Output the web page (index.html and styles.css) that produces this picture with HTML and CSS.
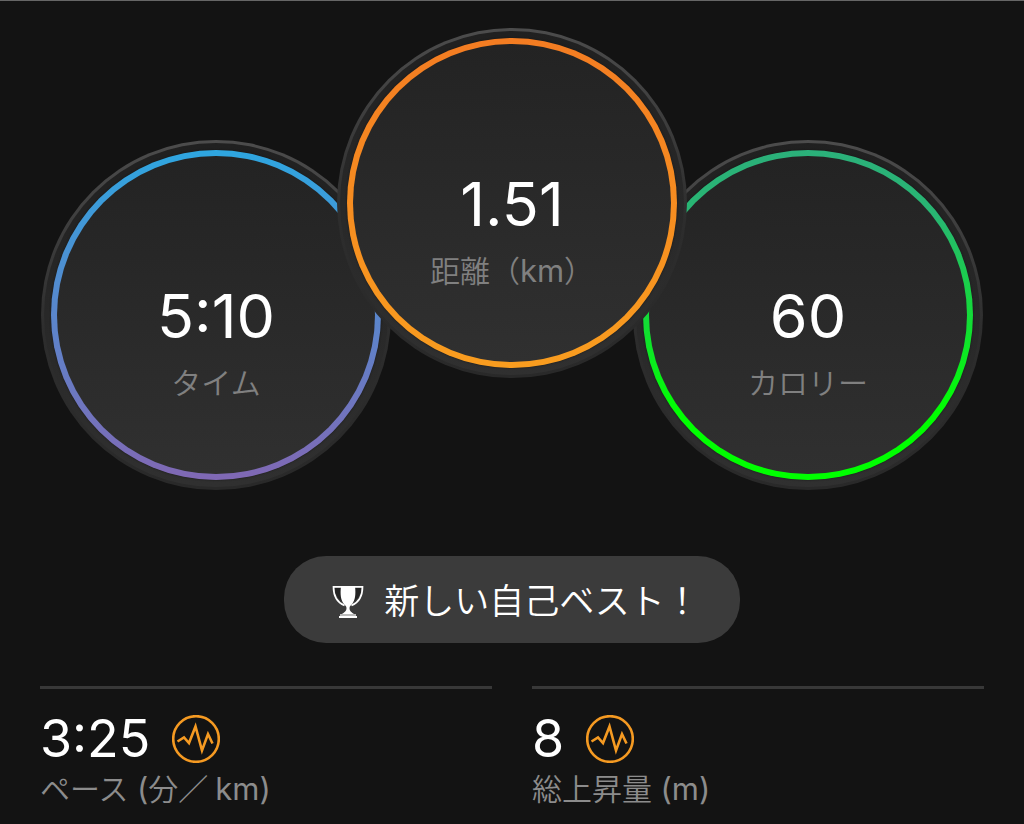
FILE: index.html
```html
<!DOCTYPE html>
<html lang="ja">
<head>
<meta charset="utf-8">
<meta name="viewport" content="width=device-width, initial-scale=1">
<title>ワークアウト</title>
<link rel="stylesheet" href="styles.css">
</head>
<body>
<main class="summary">
  <section class="dials">
    <div class="dial dial-time">
      <div class="ring">
        <div class="dial-value">5:10</div>
        <div class="dial-label">タイム</div>
      </div>
    </div>
    <div class="dial dial-distance">
      <div class="ring">
        <div class="dial-value">1.51</div>
        <div class="dial-label">距離（<span class="unit">km</span>）</div>
      </div>
    </div>
    <div class="dial dial-calories">
      <div class="ring">
        <div class="dial-value">60</div>
        <div class="dial-label">カロリー</div>
      </div>
    </div>
  </section>

  <button class="best" type="button">
    <svg class="trophy" viewBox="0 0 32 34" aria-hidden="true">
      <path d="M2.500 3h7c0 6 0 10 2 14.500C6.500 14.500 3 10 2.500 3zM29.500 3h-7c0 6 0 10-2 14.500 5-3 8.500-7.500 9-14.500z" fill="#242424"/>
      <path d="M10 1.800H1.500C1.500 11 5 17.500 12.500 20.500M22 1.800h8.500C30.500 11 27 17.500 19.500 20.500" fill="none" stroke="#fff" stroke-width="1.700"/>
      <path d="M9 1h14c1 9 0 14-2.500 17.500-1.500 2-3 2.500-3 4.500 0 3.500 2.500 4.500 4.500 6H10c2-1.500 4.500-2.500 4.500-6 0-2-1.500-2.500-3-4.500C9 15 8 10 9 1z" fill="#fff"/>
      <path d="M8 29h16v2H8z" fill="#bbb"/>
      <path d="M7 31h18v2H7z" fill="#fff"/>
    </svg>
    <span>新しい自己ベスト！</span>
  </button>

  <section class="stats">
    <div class="stat">
      <div class="stat-top">
        <span class="stat-value">3:25</span>
        <svg class="pulse" viewBox="0 0 48 48" aria-hidden="true">
          <circle cx="24" cy="24" r="22.800"/>
          <path d="M5.500 26.500L12 22.500l5 5.500L23.500 11.500l6.500 24L36 19l4.500 9.500"/>
        </svg>
      </div>
      <div class="stat-label">ペース <span class="unit">(</span>分／<span class="unit unit-after-slash">km)</span></div>
    </div>
    <div class="stat">
      <div class="stat-top">
        <span class="stat-value">8</span>
        <svg class="pulse" viewBox="0 0 48 48" aria-hidden="true">
          <circle cx="24" cy="24" r="22.800"/>
          <path d="M5.500 26.500L12 22.500l5 5.500L23.500 11.500l6.500 24L36 19l4.500 9.500"/>
        </svg>
      </div>
      <div class="stat-label">総上昇量 <span class="unit">(m)</span></div>
    </div>
  </section>
</main>
</body>
</html>
```
FILE: styles.css
```css
* {
  box-sizing: border-box;
}

body {
  margin: 0;
  background: #131313;
  color: #fff;
  font-family: Inter, "Noto Sans CJK JP", sans-serif;
}

.summary {
  display: flex;
  flex-direction: column;
  align-items: center;
  padding: 26px 40px 14px;
  border-top: 1px solid #666;
}

.dials {
  display: flex;
  justify-content: center;
  align-items: flex-start;
}

.dial {
  flex: none;
  width: 350px;
  height: 350px;
  margin-top: 113px;
  padding: 7px;
  border: 3px solid transparent;
  border-radius: 50%;
  background:
    linear-gradient(#202020, #303030) padding-box,
    linear-gradient(#4c4c4c, #2d2d2d 55%, #292929) border-box;
}

.dial-distance {
  z-index: 1;
  margin: 1px -54px 0;
}

.ring {
  display: flex;
  flex-direction: column;
  align-items: center;
  height: 100%;
  padding-top: 124px;
  border: 6px solid transparent;
  border-radius: 50%;
  box-shadow: 0 0 2px #141414;
}

.dial-time .ring {
  background:
    linear-gradient(#232323, #303030) padding-box,
    linear-gradient(#2ea6e0, #5a86cc 50%, #8068b4) border-box;
}

.dial-distance .ring {
  background:
    linear-gradient(#232323, #303030) padding-box,
    linear-gradient(#f37c22, #f99d1f) border-box;
}

.dial-calories .ring {
  background:
    linear-gradient(#232323, #303030) padding-box,
    linear-gradient(#2bb07a, #28b672 20%, #0f0 80%) border-box;
}

.dial-value {
  font-size: 61px;
  line-height: 72px;
}

.dial-label {
  margin-top: 11px;
  color: #808080;
  font-size: 30px;
  font-weight: 350;
  line-height: 40px;
}

.unit {
  font-size: 31px;
  font-weight: 400;
}

.unit-after-slash {
  margin-left: 7px;
}

.best {
  display: flex;
  align-items: center;
  gap: 20px;
  margin-top: 66px;
  padding: 20px 40px 16px 48px;
  border: 0;
  border-radius: 42px;
  background: #3b3b3b;
  color: #fff;
  font-family: inherit;
  font-size: 35px;
  font-weight: 350;
  line-height: 51px;
}

.trophy {
  width: 32px;
  height: 34px;
}

.stats {
  display: grid;
  grid-template-columns: 1fr 1fr;
  gap: 40px;
  width: 100%;
  margin-top: 43px;
}

.stat {
  padding-top: 20px;
  border-top: 3px solid #383838;
}

.stat-top {
  display: flex;
  align-items: center;
  gap: 22px;
}

.stat-value {
  font-size: 52px;
  line-height: 60px;
}

.pulse {
  width: 48px;
  height: 48px;
  fill: none;
  stroke: #f59a22;
  stroke-width: 2.6;
}

.stat-label {
  color: #8c8c8c;
  font-size: 30px;
  font-weight: 350;
  line-height: 40px;
}
```
